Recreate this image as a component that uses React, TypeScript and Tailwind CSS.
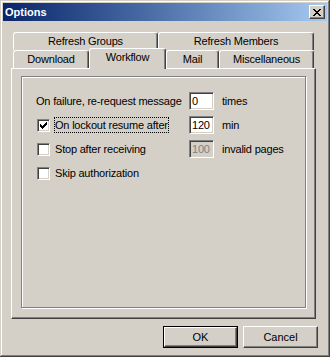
import React from "react";

const font = { fontFamily: '"Liberation Sans", Arial, sans-serif' };

function Tab({
  label,
  width,
  selected,
}: {
  label: string;
  width: string;
  selected?: boolean;
}) {
  return (
    <div
      className={`${width} ${
        selected ? "h-[21px] mb-[-1px] relative z-10 pb-[3px]" : "h-[18px]"
      } flex items-center justify-center bg-[#d4d0c8] border-l border-t border-r border-l-white border-t-white border-r-[#404040] rounded-t-[3px] shadow-[inset_-1px_0_0_#808080] text-[11px] tracking-[-0.2px] text-black`}
    >
      {label}
    </div>
  );
}

function Field({ value, disabled }: { value: string; disabled?: boolean }) {
  return (
    <div
      className={`w-[25px] h-[18px] flex items-center pl-[2px] border border-t-[#808080] border-l-[#808080] border-b-white border-r-white shadow-[inset_1px_1px_0_#404040,inset_-1px_-1px_0_#d4d0c8] text-[11px] ${
        disabled ? "bg-[#d4d0c8] text-[#808080]" : "bg-white text-black"
      }`}
    >
      {value}
    </div>
  );
}

function CheckBox({ checked }: { checked?: boolean }) {
  return (
    <div className="w-[13px] h-[13px] shrink-0 bg-white border border-t-[#808080] border-l-[#808080] border-b-white border-r-white shadow-[inset_1px_1px_0_#404040,inset_-1px_-1px_0_#d4d0c8] flex items-center justify-center">
      {checked && (
        <svg width="7" height="7" viewBox="0 0 7 7" shapeRendering="crispEdges">
          <rect x="0" y="2" width="1" height="3" fill="#000" />
          <rect x="1" y="3" width="1" height="3" fill="#000" />
          <rect x="2" y="4" width="1" height="3" fill="#000" />
          <rect x="3" y="3" width="1" height="3" fill="#000" />
          <rect x="4" y="2" width="1" height="3" fill="#000" />
          <rect x="5" y="1" width="1" height="3" fill="#000" />
          <rect x="6" y="0" width="1" height="3" fill="#000" />
        </svg>
      )}
    </div>
  );
}

function Button({ label, isDefault }: { label: string; isDefault?: boolean }) {
  return (
    <div
      className={`w-[75px] h-[22px] ${
        isDefault ? "border border-black" : ""
      } bg-[#d4d0c8]`}
    >
      <div className="w-full h-full flex items-center justify-center border border-t-white border-l-white border-b-[#404040] border-r-[#404040] shadow-[inset_-1px_-1px_0_#808080] text-[11px] text-black">
        {label}
      </div>
    </div>
  );
}

export default function App() {
  return (
    <div
      style={font}
      className="w-[330px] h-[357px] bg-[#d4d0c8] p-[3px] flex flex-col shadow-[inset_-1px_-1px_0_#404040,inset_1px_1px_0_#d4d0c8,inset_-2px_-2px_0_#808080,inset_2px_2px_0_#ffffff]"
    >
      {/* title bar */}
      <div className="h-[18px] flex items-center justify-between bg-linear-to-r from-[#0a246a] to-[#a6caf0] pl-[2px] pr-[2px]">
        <span className="text-[11px] font-bold text-white">Options</span>
        <div className="w-[16px] h-[14px] bg-[#d4d0c8] border border-t-white border-l-white border-b-[#404040] border-r-[#404040] shadow-[inset_-1px_-1px_0_#808080] flex items-center justify-center">
          <svg width="8" height="7" viewBox="0 0 8 7" shapeRendering="crispEdges">
            <path
              d="M0 0h2v1h-2z M6 0h2v1h-2z M1 1h2v1h-2z M5 1h2v1h-2z M2 2h4v1h-4z M3 3h2v1h-2z M2 4h4v1h-4z M1 5h2v1h-2z M5 5h2v1h-2z M0 6h2v1h-2z M6 6h2v1h-2z"
              fill="#000"
            />
          </svg>
        </div>
      </div>

      {/* tabs */}
      <div className="mt-[11px] ml-[10px] flex flex-col">
        <div className="flex h-[18px]">
          <Tab label="Refresh Groups" width="w-[145px]" />
          <Tab label="Refresh Members" width="w-[156px]" />
        </div>
        <div className="flex items-end h-[18px]">
          <Tab label="Download" width="w-[76px]" />
          <Tab label="Workflow" width="w-[77px]" selected />
          <Tab label="Mail" width="w-[53px]" />
          <Tab label="Miscellaneous" width="w-[95px]" />
        </div>
      </div>

      {/* panel */}
      <div className="ml-[8px] w-[305px] h-[251px] border border-t-white border-l-white border-b-[#404040] border-r-[#404040] shadow-[inset_-1px_-1px_0_#808080]">
        <div className="ml-[9px] mt-[7px] w-[285px] h-[232px] border border-[#808080] shadow-[inset_1px_1px_0_#ffffff,1px_1px_0_#ffffff] pt-[12px] pl-[14px] text-[11px] tracking-[-0.2px] text-black">
          <div className="flex items-center h-[24px]">
            <div className="w-[153px]">On failure, re-request message</div>
            <Field value="0" />
            <span className="ml-[8px]">times</span>
          </div>
          <div className="flex items-center h-[24px]">
            <div className="w-[153px] flex items-center pl-[1px] gap-[4px]">
              <CheckBox checked />
              <span className="border border-dotted border-black leading-[14px]">
                On lockout resume after
              </span>
            </div>
            <Field value="120" />
            <span className="ml-[8px]">min</span>
          </div>
          <div className="flex items-center h-[24px]">
            <div className="w-[153px] flex items-center pl-[1px] gap-[4px]">
              <CheckBox />
              <span className="border border-transparent leading-[14px]">
                Stop after receiving
              </span>
            </div>
            <Field value="100" disabled />
            <span className="ml-[8px]">invalid pages</span>
          </div>
          <div className="flex items-center h-[24px]">
            <div className="w-[153px] flex items-center pl-[1px] gap-[4px]">
              <CheckBox />
              <span className="border border-transparent leading-[14px]">
                Skip authorization
              </span>
            </div>
          </div>
        </div>
      </div>

      {/* buttons */}
      <div className="mt-[7px] flex justify-end gap-[5px] pr-[9px]">
        <Button label="OK" isDefault />
        <Button label="Cancel" />
      </div>
    </div>
  );
}
